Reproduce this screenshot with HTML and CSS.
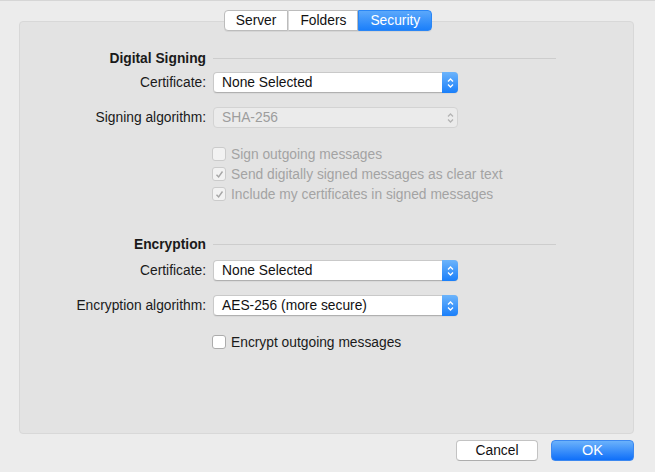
FILE: index.html
```html
<!DOCTYPE html>
<html lang="en">
<head>
    <meta charset="UTF-8">
    <title>Account Settings - Security</title>
    <link rel="stylesheet" href="styles.css">
</head>
<body>
    <div class="window">
        <div class="tabs">
            <div class="tab">Server</div>
            <div class="tab">Folders</div>
            <div class="tab active">Security</div>
        </div>

        <div class="panel">
            <div class="row heading">
                <div class="label">Digital Signing</div>
                <div class="rule"></div>
            </div>
            <div class="row popup-row first">
                <div class="label">Certificate:</div>
                <div class="popup">
                    <span>None Selected</span>
                    <span class="arrows">
                        <svg width="7" height="12" viewBox="0 0 7 12"><path d="M1 4.5 L3.5 2 L6 4.5 M1 7.5 L3.5 10 L6 7.5" fill="none" stroke="#fff" stroke-width="1.3"/></svg>
                    </span>
                </div>
            </div>
            <div class="row popup-row">
                <div class="label">Signing algorithm:</div>
                <div class="popup disabled">
                    <span>SHA-256</span>
                    <span class="arrows">
                        <svg width="7" height="12" viewBox="0 0 7 12"><path d="M1 4.5 L3.5 2 L6 4.5 M1 7.5 L3.5 10 L6 7.5" fill="none" stroke="#b4b4b4" stroke-width="1.3"/></svg>
                    </span>
                </div>
            </div>

            <div class="checks">
                <div class="check disabled">
                    <span class="box"></span>Sign outgoing messages
                </div>
                <div class="check disabled">
                    <span class="box"><svg width="9" height="9" viewBox="0 0 9 9"><path d="M1.5 4.8 L3.6 7 L7.5 1.5" fill="none" stroke="#a6a6a6" stroke-width="1.4"/></svg></span>Send digitally signed messages as clear text
                </div>
                <div class="check disabled">
                    <span class="box"><svg width="9" height="9" viewBox="0 0 9 9"><path d="M1.5 4.8 L3.6 7 L7.5 1.5" fill="none" stroke="#a6a6a6" stroke-width="1.4"/></svg></span>Include my certificates in signed messages
                </div>
            </div>

            <div class="row heading second">
                <div class="label">Encryption</div>
                <div class="rule"></div>
            </div>
            <div class="row popup-row near">
                <div class="label">Certificate:</div>
                <div class="popup">
                    <span>None Selected</span>
                    <span class="arrows">
                        <svg width="7" height="12" viewBox="0 0 7 12"><path d="M1 4.5 L3.5 2 L6 4.5 M1 7.5 L3.5 10 L6 7.5" fill="none" stroke="#fff" stroke-width="1.3"/></svg>
                    </span>
                </div>
            </div>
            <div class="row popup-row">
                <div class="label">Encryption algorithm:</div>
                <div class="popup">
                    <span>AES-256 (more secure)</span>
                    <span class="arrows">
                        <svg width="7" height="12" viewBox="0 0 7 12"><path d="M1 4.5 L3.5 2 L6 4.5 M1 7.5 L3.5 10 L6 7.5" fill="none" stroke="#fff" stroke-width="1.3"/></svg>
                    </span>
                </div>
            </div>

            <div class="checks">
                <div class="check">
                    <span class="box"></span>Encrypt outgoing messages
                </div>
            </div>
        </div>

        <div class="buttons">
            <div class="btn">Cancel</div>
            <div class="btn primary">OK</div>
        </div>
    </div>
</body>
</html>
```

FILE: styles.css
```css
body {
    margin: 0;
    padding: 0;
    background-color: #ececec;
    font-family: "Liberation Sans", Arial, sans-serif;
    font-size: 13.8px;
    color: #1a1a1a;
}

.window {
    width: 655px;
    height: 472px;
    border-top: 1px solid #d6d6d6;
    box-sizing: border-box;
    padding: 10px 21px 0 19px;
}

/* Segmented tab control */
.tabs {
    position: relative;
    z-index: 1;
    display: flex;
    justify-content: center;
    margin-left: 3px;
    margin-top: -1px;
}

.tab {
    height: 19px;
    line-height: 19px;
    padding: 0 11px;
    background: #fff;
    border: 1px solid #bcbcbc;
    border-left: 1px solid #dadada;
    color: #111;
    box-shadow: 0 1px 0 rgba(0, 0, 0, 0.06);
}

.tab:first-child {
    border-left: 1px solid #bcbcbc;
    border-radius: 4px 0 0 4px;
}

.tab:last-child {
    border-radius: 0 4px 4px 0;
}

.tab.active {
    background: linear-gradient(#5ba8fb, #1b7ffa);
    border-color: #2a86f5;
    color: #fff;
}

.panel {
    margin-top: -10px;
    height: 413px;
    box-sizing: border-box;
    background-color: #e3e3e3;
    border: 1px solid #d8d8d8;
    border-radius: 4px;
    padding-top: 28px;
}

.row {
    display: flex;
    align-items: center;
}

.label {
    width: 186px;
    text-align: right;
    margin-right: 7px;
    flex-shrink: 0;
}

.heading {
    height: 16px;
}

.heading .label {
    font-weight: bold;
}

.heading.second {
    margin-top: 32px;
}

.rule {
    width: 343px;
    height: 1px;
    background-color: #cdcdcd;
}

.popup-row {
    margin-top: 14px;
}

.popup-row.first {
    margin-top: 6px;
}

.popup-row.near {
    margin-top: 8px;
}

.popup {
    width: 245px;
    height: 21px;
    box-sizing: border-box;
    display: flex;
    align-items: center;
    justify-content: space-between;
    background: #fff;
    border: 1px solid #c9c9c9;
    border-bottom-color: #b0b0b0;
    border-radius: 4px;
    padding-left: 8px;
    box-shadow: 0 1px 1px rgba(0, 0, 0, 0.05);
    color: #111;
}

.arrows {
    width: 16px;
    height: 21px;
    margin: -1px -1px -1px 0;
    display: flex;
    align-items: center;
    justify-content: center;
    background: linear-gradient(#6cb4fb, #1a7ffa);
    border-radius: 0 4px 4px 0;
}

.popup.disabled {
    background: #ebebeb;
    border-color: #d3d3d3;
    color: #9d9d9d;
    box-shadow: none;
}

.popup.disabled .arrows {
    background: none;
}

.checks {
    margin-top: 16px;
    padding-left: 192px;
}

.check {
    height: 20px;
    display: flex;
    align-items: center;
}

.box {
    width: 12px;
    height: 12px;
    margin-right: 5px;
    display: flex;
    align-items: center;
    justify-content: center;
    background: #fff;
    border: 1px solid #acacac;
    border-radius: 3px;
}

.check.disabled {
    color: #a3a3a3;
}

.check.disabled .box {
    background: #f2f2f2;
    border-color: #cbcbcb;
}

.buttons {
    display: flex;
    justify-content: flex-end;
    gap: 13px;
    margin-top: 6px;
}

.btn {
    width: 82px;
    height: 21px;
    box-sizing: border-box;
    line-height: 19px;
    text-align: center;
    background: #fff;
    border: 1px solid #c3c3c3;
    border-bottom-color: #adadad;
    border-radius: 4px;
    color: #111;
}

.btn.primary {
    width: 83px;
    background: linear-gradient(#6bb2fb, #0f6ff9);
    border-color: #3b88f0;
    color: #fff;
    font-size: 14.5px;
}
```
